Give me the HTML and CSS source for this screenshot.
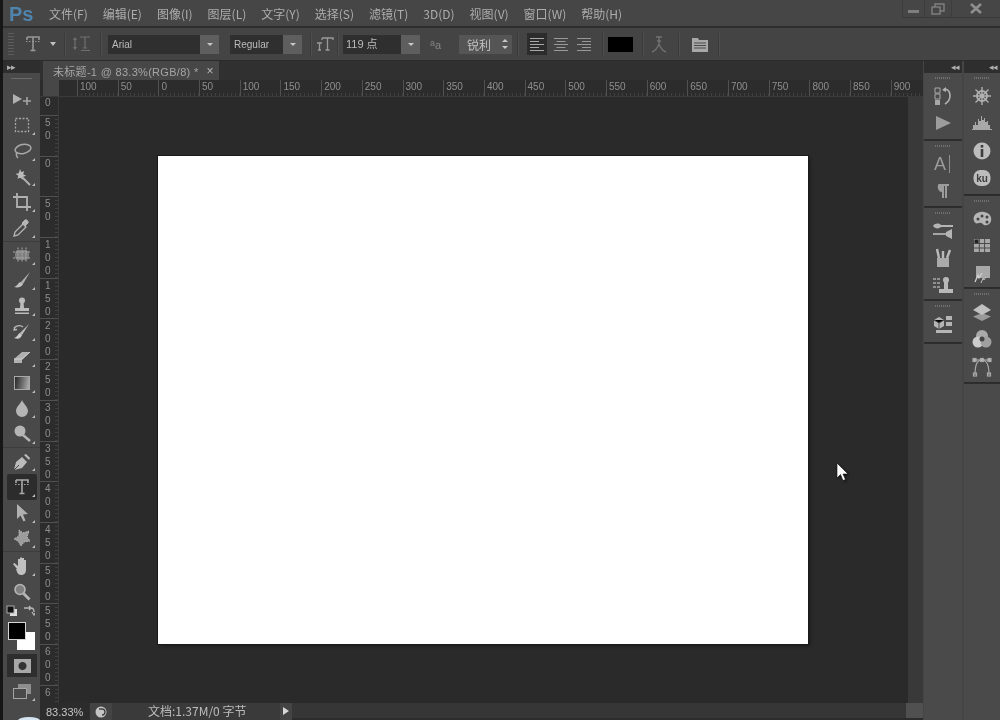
FILE: index.html
```html
<!DOCTYPE html>
<html lang="zh">
<head>
<meta charset="utf-8">
<title>Photoshop</title>
<link rel="stylesheet" href="styles.css">
</head>
<body>
<div class="app">
  <header class="menubar">
    <span class="logo">Ps</span>
    <nav class="menus">
      <span>文件(F)</span><span>编辑(E)</span><span>图像(I)</span><span>图层(L)</span><span>文字(Y)</span><span>选择(S)</span><span>滤镜(T)</span><span>3D(D)</span><span>视图(V)</span><span>窗口(W)</span><span>帮助(H)</span>
    </nav>
    <div class="winctl">
      <span class="wc wc-min"><svg width="14" height="14" viewBox="0 0 14 14"><rect x="1" y="8" width="11" height="3" fill="#7f7f7f"/></svg></span>
      <span class="wc wc-res"><svg width="14" height="14" viewBox="0 0 14 14" fill="none" stroke="#808080" stroke-width="1.4"><rect x="1" y="5" width="8" height="7"/><path d="M4 5V2h9v7H9"/></svg></span>
      <span class="wc wc-close"><svg width="14" height="14" viewBox="0 0 14 14"><path d="M2 2l10 9M12 2L2 11" stroke="#8e8e8e" stroke-width="2.6"/></svg></span>
    </div>
  </header>

  <div class="options">
    <span class="grip"></span>
    <span class="opt opt-tool"><svg width="20" height="20" viewBox="0 0 20 20" fill="none" stroke="#969696"><path d="M4 3h12v3M4 6V3M10 3v13M7.500 16.500h5" stroke-width="1.600"/><path d="M3 7.500h14" stroke-dasharray="1.500 1.500"/></svg></span>
    <span class="caret-sm"></span>
    <span class="sep s1"></span>
    <span class="opt opt-flip"><svg width="20" height="18" viewBox="0 0 20 18" fill="none" stroke="#707070" stroke-width="1.200"><path d="M8 2h10M13 2v11M11 13h4M3 3v11M1.500 5L3 3l1.500 2M1.500 12L3 14l1.500-2M9 15.500h9"/></svg></span>
    <span class="sep s2"></span>
    <span class="combo c-font"><span class="val">Arial</span><span class="btn"></span></span>
    <span class="combo c-style"><span class="val">Regular</span><span class="btn"></span></span>
    <span class="sep s3"></span>
    <span class="opt opt-size"><svg width="20" height="18" viewBox="0 0 20 18" fill="none" stroke="#999" stroke-width="1.300"><path d="M7 3h11v2M7 5V3M12.500 3v12M10.500 15h4M2 8h5M4.500 8v7M3 15h3"/></svg></span>
    <span class="sep s4"></span>
    <span class="combo c-size"><span class="val">119 点</span><span class="btn"></span></span>
    <span class="aa"><small>a</small>a</span>
    <span class="aamode">锐利<i class="updown"></i></span>
    <span class="sep s5"></span>
    <span class="align active"><svg width="16" height="14" viewBox="0 0 16 14" stroke="#a8a8a8"><path d="M1 1.500h14M1 4.500h9M1 7.500h14M1 10.500h9M1 13.500h14"/></svg></span>
    <span class="align"><svg width="16" height="14" viewBox="0 0 16 14" stroke="#999"><path d="M1 1.500h14M3.500 4.500h9M1 7.500h14M3.500 10.500h9M1 13.500h14"/></svg></span>
    <span class="align"><svg width="16" height="14" viewBox="0 0 16 14" stroke="#999"><path d="M1 1.500h14M6 4.500h9M1 7.500h14M6 10.500h9M1 13.500h14"/></svg></span>
    <span class="sep s6"></span>
    <span class="swatch"></span>
    <span class="sep s7"></span>
    <span class="opt opt-warp"><svg width="20" height="20" viewBox="0 0 20 20" fill="none" stroke="#707070" stroke-width="1.400"><path d="M7 3h6M10 3v7M8 7h4M3 18c3-1 5-3 7-8 2 5 4 7 7 8"/></svg></span>
    <span class="sep s8"></span>
    <span class="opt opt-panel"><svg width="18" height="18" viewBox="0 0 18 18"><path d="M1 3h6l1 2h9v12H1z" fill="#a8a8a8"/><path d="M3 8h12M3 10.500h12M3 13h12" stroke="#4a4a4a"/></svg></span>
    <span class="sep s9"></span>
  </div>

  <main class="workspace">
    <aside class="tools">
      <div class="panelhead"><span class="arrows">▸▸</span></div>
      <div class="toolbox">
        <div class="grip-h"></div>
        <div class="tgroup tg-a">
          <span class="tool"><svg width="22" height="20" viewBox="0 0 22 20"><path d="M2 4l9 5-9 5z" fill="#b0b0b0"/><path d="M16 7v8M12 11h8" stroke="#a5a5a5" stroke-width="1.600"/></svg></span>
          <span class="tool has-more"><svg width="20" height="20" viewBox="0 0 20 20"><rect x="3.500" y="3.500" width="13" height="13" fill="none" stroke="#a5a5a5" stroke-width="1.300" stroke-dasharray="2 1.500"/></svg></span>
          <span class="tool has-more"><svg width="20" height="20" viewBox="0 0 20 20" fill="none" stroke="#a8a8a8" stroke-width="1.500"><ellipse cx="11" cy="8" rx="8" ry="4.500" transform="rotate(-12 11 8)"/><path d="M5 11c-1 2-1 4 1 6"/></svg></span>
          <span class="tool has-more"><svg width="20" height="20" viewBox="0 0 20 20"><path d="M8 2l1.200 3 3-.8-1 3 3 1.500-3 1-.5 3-2.400-2-2.800 1 .8-3-2.800-2 3.200-.5z" fill="#bbb"/><path d="M10 10l8 8" stroke="#b0b0b0" stroke-width="2"/></svg></span>
          <span class="tool has-more"><svg width="20" height="20" viewBox="0 0 20 20" fill="none" stroke="#b0b0b0" stroke-width="1.800"><path d="M5 1v14h14M1 5h14v14"/></svg></span>
          <span class="tool has-more"><svg width="20" height="20" viewBox="0 0 20 20"><path d="M2 18l1-4 8-8 3 3-8 8z" fill="none" stroke="#b5b5b5" stroke-width="1.300"/><path d="M10 5l3-3c1.500-1 4 1.500 3 3l-3 3z" fill="#b5b5b5" stroke="#b5b5b5"/></svg></span>
        </div>
        <div class="tgroup">
          <span class="tool has-more"><svg width="20" height="20" viewBox="0 0 20 20"><rect x="3" y="5" width="14" height="10" rx="4" fill="#808080"/><path d="M6 2.500v15M10 2.500v15M14 2.500v15M1 7h18M1 13h18" stroke="#a8a8a8" stroke-width="1" stroke-dasharray="2 1"/></svg></span>
          <span class="tool has-more"><svg width="20" height="20" viewBox="0 0 20 20"><path d="M18 2l-9 10 2 2z" fill="#b0b0b0"/><path d="M9 12c-3 0-3 4-7 5 4 1 8 0 9-3z" fill="#c0c0c0"/></svg></span>
          <span class="tool has-more"><svg width="20" height="20" viewBox="0 0 20 20" fill="#bbb"><circle cx="10" cy="4.500" r="3"/><path d="M8.500 6h3l.5 6h-4z"/><path d="M3 12h14v3H3z"/><rect x="3" y="16.500" width="14" height="1.500"/></svg></span>
          <span class="tool has-more"><svg width="20" height="20" viewBox="0 0 20 20"><path d="M17 2L8 11l2 2z" fill="#bbb"/><path d="M8 11c-2 .5-2 4-6 5 4 1.500 7 .5 8-3z" fill="#ccc"/><path d="M2 6c3-3 7-3 9-1M3 5l-1 3 3-.5" fill="none" stroke="#bbb" stroke-width="1.300"/></svg></span>
          <span class="tool has-more"><svg width="20" height="20" viewBox="0 0 20 20"><path d="M2 12l8-7h8l-8 8v3H2z" fill="#b0b0b0"/><path d="M2 12h8l8-7" fill="none" stroke="#d0d0d0"/></svg></span>
          <span class="tool has-more"><span class="gradient"></span></span>
          <span class="tool has-more"><svg width="20" height="20" viewBox="0 0 20 20"><path d="M10 2c1 3 6 7 6 11a6 6 0 0 1-12 0c0-4 5-8 6-11z" fill="#b5b5b5"/></svg></span>
          <span class="tool has-more"><svg width="20" height="20" viewBox="0 0 20 20"><circle cx="8" cy="7" r="5.500" fill="#b5b5b5"/><path d="M11 11l7 6" stroke="#b5b5b5" stroke-width="2.400"/></svg></span>
        </div>
        <div class="tgroup">
          <span class="tool has-more"><svg width="20" height="20" viewBox="0 0 20 20"><path d="M2 18l2-8 6-5 5 5-5 6z" fill="#bbb"/><path d="M12 3l2-1 4 4-1 2z" fill="#bbb"/><path d="M2 18l5-5" stroke="#444"/></svg></span>
          <span class="tool has-more active"><svg width="20" height="20" viewBox="0 0 20 20" fill="none" stroke="#a8a8a8"><path d="M4 3h12v3M4 6V3M10 3v13M7.500 16.500h5" stroke-width="1.600"/><path d="M3 7.500h14" stroke-dasharray="1.500 1.500"/></svg></span>
          <span class="tool has-more"><svg width="20" height="20" viewBox="0 0 20 20"><path d="M5 1l11 10-5 .5 2.500 6-2 1-3-6L5 16z" fill="#b0b0b0"/></svg></span>
          <span class="tool has-more"><svg width="20" height="20" viewBox="0 0 20 20"><path d="M7 2l4 3 6-2-2 6 3 4-6 1-3 4-3-5-4-2 5-3z" fill="#9c9c9c" stroke="#bbb" stroke-dasharray="1.500 1"/></svg></span>
        </div>
        <div class="tgroup tg-d">
          <span class="tool has-more"><svg width="22" height="22" viewBox="0 0 22 22"><path d="M6 14L2 9l1.500-1L7 11V4h2v6V2.500h2V10V3h2v7.500V5h2v10c0 3-2 5-5 5s-4-3-5-6z" fill="#c0c0c0"/></svg></span>
          <span class="tool"><svg width="20" height="20" viewBox="0 0 20 20"><circle cx="8" cy="7.500" r="5" fill="#808080" stroke="#b5b5b5" stroke-width="1.600"/><path d="M11.500 11.500l6 6" stroke="#b5b5b5" stroke-width="2.800"/></svg></span>
        </div>
        <div class="swap">
          <svg width="12" height="12" viewBox="0 0 12 12"><rect x="4" y="4" width="7" height="7" fill="#ddd"/><rect x="1" y="1" width="7" height="7" fill="#111" stroke="#aaa"/></svg>
          <svg width="12" height="12" viewBox="0 0 12 12" fill="none" stroke="#b5b5b5" stroke-width="1.300"><path d="M1 3h7c2 0 3 1 3 4M6 1L8 3 6 5M9 7l2 3 1-2"/></svg>
        </div>
        <div class="colors"><span class="bg"></span><span class="fg"></span></div>
        <div class="qmask"><span class="qm"><i></i></span></div>
        <span class="tool has-more"><svg width="22" height="20" viewBox="0 0 22 20"><rect x="7" y="3" width="13" height="10" fill="#8e8e8e"/><rect x="2.500" y="7.500" width="13" height="10" fill="#4a4a4a" stroke="#a5a5a5"/></svg></span>
      </div>
    </aside>

    <section class="center">
      <div class="tabbar">
        <div class="tab"><span>未标题-1 @ 83.3%(RGB/8) *</span><span class="tabx">×</span></div>
      </div>
      <div class="hruler">
        <span class="rcorner"></span>
        <span class="hfirst"></span>
        <span class="hcell">100</span><span class="hcell">50</span><span class="hcell">0</span><span class="hcell">50</span><span class="hcell">100</span><span class="hcell">150</span><span class="hcell">200</span><span class="hcell">250</span><span class="hcell">300</span><span class="hcell">350</span><span class="hcell">400</span><span class="hcell">450</span><span class="hcell">500</span><span class="hcell">550</span><span class="hcell">600</span><span class="hcell">650</span><span class="hcell">700</span><span class="hcell">750</span><span class="hcell">800</span><span class="hcell">850</span><span class="hcell hlast">900</span>
      </div>
      <div class="midrow">
        <div class="vruler">
          <span class="vfirst">0</span>
          <span class="vcell">5<br>0</span><span class="vcell">0</span><span class="vcell">5<br>0</span><span class="vcell">1<br>0<br>0</span><span class="vcell">1<br>5<br>0</span><span class="vcell">2<br>0<br>0</span><span class="vcell">2<br>5<br>0</span><span class="vcell">3<br>0<br>0</span><span class="vcell">3<br>5<br>0</span><span class="vcell">4<br>0<br>0</span><span class="vcell">4<br>5<br>0</span><span class="vcell">5<br>0<br>0</span><span class="vcell">5<br>5<br>0</span><span class="vcell">6<br>0<br>0</span><span class="vcell">6</span>
        </div>
        <div class="canvas"><div class="doc"></div></div>
        <div class="vscroll"></div>
      </div>
      <footer class="status">
        <span class="zoomval">83.33%</span>
        <span class="st-icon"><svg width="12" height="12" viewBox="0 0 12 12"><circle cx="6" cy="6" r="5.500" fill="#c5c5c5"/><path d="M4 3h3a3 3 0 0 1 0 6" fill="none" stroke="#444" stroke-width="1.400"/></svg></span>
        <span class="docinfo">文档:1.37M/0 字节</span>
        <span class="st-arrow"></span>
        <span class="hscroll"></span>
        <span class="corner"></span>
      </footer>
    </section>

    <aside class="dock dock1">
      <div class="dockhead"><span class="rw">◂◂</span></div>
      <div class="group g1a">
        <span class="dgrip"></span>
        <span class="dicon"><svg width="20" height="20" viewBox="0 0 20 20"><path d="M2 2h5v5H2zM2 8h5v5H2z" fill="none" stroke="#a8a8a8"/><rect x="2" y="14" width="5" height="5" fill="#a8a8a8"/><path d="M11 3c4 0 6 3 6 7s-2 6-5 8" fill="none" stroke="#b0b0b0" stroke-width="1.600"/><path d="M9 4l4-3v5z" fill="#b0b0b0"/></svg></span>
        <span class="dicon"><svg width="20" height="20" viewBox="0 0 20 20"><path d="M3 3l15 7-15 7z" fill="#9c9c9c"/></svg></span>
      </div>
      <div class="group g1b">
        <span class="dgrip"></span>
        <span class="dicon"><svg width="20" height="20" viewBox="0 0 20 20"><text x="1" y="16" class="dtext">A</text><path d="M16.500 1v18" stroke="#8e8e8e"/></svg></span>
        <span class="dicon"><svg width="20" height="20" viewBox="0 0 20 20"><path d="M6 3h10v2h-2v12h-2V5h-1v12H9v-6c-5 0-5-8-3-8z" fill="#9c9c9c"/></svg></span>
      </div>
      <div class="group g1c">
        <span class="dgrip"></span>
        <span class="dicon"><svg width="22" height="20" viewBox="0 0 22 20"><path d="M1 5c2-3 6-3 8-1h12v2H9c-2 2-6 2-8-1z" fill="#b5b5b5"/><path d="M1 13h13" stroke="#a5a5a5" stroke-width="2"/><path d="M14 11l6-3v10l-6-3z" fill="#b5b5b5"/></svg></span>
        <span class="dicon"><svg width="20" height="22" viewBox="0 0 20 22"><path d="M4 11h12v9H4z" fill="#aaa"/><path d="M6 11L4 2M10 11V4M14 11l3-8" stroke="#bbb" stroke-width="2.400"/></svg></span>
        <span class="dicon"><svg width="22" height="22" viewBox="0 0 22 22"><path d="M1 4h7M1 8h7M1 12h7" stroke="#a8a8a8" stroke-dasharray="3 1" stroke-width="1.300"/><circle cx="14" cy="5" r="3" fill="#b8b8b8"/><path d="M12 7h4v7h-4z" fill="#b8b8b8"/><path d="M7 14h14v4H7z" fill="#b8b8b8"/></svg></span>
      </div>
      <div class="group g1d">
        <span class="dgrip"></span>
        <span class="dicon"><svg width="20" height="20" viewBox="0 0 20 20"><path d="M1 6l5-3 5 3v6l-5 3-5-3z" fill="#b5b5b5"/><path d="M1 6l5 3 5-3M6 9v6" stroke="#4a4a4a"/><rect x="13" y="2" width="6" height="4" fill="#b5b5b5"/><rect x="13" y="8" width="6" height="4" fill="#b5b5b5"/><rect x="3" y="16" width="16" height="3" fill="#b5b5b5"/></svg></span>
      </div>
      <div class="dockfill"></div>
    </aside>

    <aside class="dock dock2">
      <div class="dockhead"><span class="rw">◂◂</span></div>
      <div class="group g2a">
        <span class="dgrip"></span>
        <span class="dicon"><svg width="20" height="20" viewBox="0 0 20 20" fill="none" stroke="#b0b0b0"><circle cx="10" cy="10" r="5" stroke-width="2"/><circle cx="10" cy="10" r="1.800" fill="#b0b0b0"/><path d="M10 1v18M1 10h18M3.500 3.500l13 13M16.500 3.500l-13 13" stroke-width="1.400"/></svg></span>
        <span class="dicon"><svg width="22" height="18" viewBox="0 0 22 18"><path d="M1 15h20v1H1zM2 15V11h2V8h1v3h2V5h1v2h2V2h1v4h2V4h1v4h2V7h1v4h2v4z" fill="#a8a8a8"/></svg></span>
        <span class="dicon"><svg width="20" height="20" viewBox="0 0 20 20"><circle cx="10" cy="10" r="8.500" fill="#bdbdbd"/><rect x="8.700" y="4" width="2.600" height="2.600" fill="#3e3e3e"/><rect x="8.700" y="8" width="2.600" height="8" fill="#3e3e3e"/></svg></span>
        <span class="dicon"><svg width="20" height="20" viewBox="0 0 20 20"><rect x="1.500" y="2" width="17" height="16" rx="7" fill="#bdbdbd"/><text x="10" y="13.500" class="kutext">ku</text></svg></span>
      </div>
      <div class="group g2b">
        <span class="dgrip"></span>
        <span class="dicon"><svg width="20" height="18" viewBox="0 0 20 18"><path d="M2 11C0 5 6 1 12 2s8 5 7 9-5 5-7 4-2-3-5-2-4 0-5-2z" fill="#b5b5b5"/><circle cx="6" cy="9" r="1.500" fill="#444"/><circle cx="10" cy="6" r="1.500" fill="#444"/><circle cx="15" cy="7" r="1.500" fill="#444"/><circle cx="15" cy="12" r="1.500" fill="#444"/></svg></span>
        <span class="dicon"><svg width="18" height="16" viewBox="0 0 18 16"><rect x="1" y="1" width="16" height="13" fill="#a8a8a8"/><path d="M1 5.500h16M1 10h16M6.300 1v13M11.600 1v13" stroke="#4a4a4a"/><rect x="1.500" y="1.500" width="4" height="3.500" fill="#222"/></svg></span>
        <span class="dicon"><svg width="20" height="20" viewBox="0 0 20 20"><rect x="4" y="2" width="14" height="12" fill="#a8a8a8"/><path d="M3 18l3-7 1 3 3-5" fill="none" stroke="#d0d0d0" stroke-width="1.300"/><path d="M9 19l2-5 1 2 2-3" fill="none" stroke="#c0c0c0"/></svg></span>
      </div>
      <div class="group g2c">
        <span class="dgrip"></span>
        <span class="dicon"><svg width="20" height="20" viewBox="0 0 20 20"><path d="M10 11l9 3.500-9 4.500-9-4.500z" fill="#999"/><path d="M10 2l9 6-9 5-9-5z" fill="#c0c0c0"/></svg></span>
        <span class="dicon"><svg width="20" height="20" viewBox="0 0 20 20"><circle cx="10" cy="7" r="6" fill="#aaa"/><circle cx="6" cy="13" r="5.500" fill="#ccc"/><circle cx="14" cy="13" r="5.500" fill="#a0a0a0"/><circle cx="10" cy="10" r="2.500" fill="#444"/></svg></span>
        <span class="dicon"><svg width="20" height="20" viewBox="0 0 20 20" fill="none" stroke="#a8a8a8" stroke-width="1.200"><path d="M3 18C3 8 5 3 10 3s7 5 7 15"/><path d="M2 3h16"/><rect x="1" y="1.500" width="3" height="3" fill="#b8b8b8"/><rect x="16" y="1.500" width="3" height="3" fill="#b8b8b8"/><rect x="8.500" y="1.500" width="3" height="3" fill="#b8b8b8"/><rect x="1.500" y="16" width="3" height="3"/><rect x="15.500" y="16" width="3" height="3"/></svg></span>
      </div>
      <div class="dockfill"></div>
    </aside>
  </main>
  <span class="orb"></span>
  <svg class="cursor" width="14" height="20" viewBox="0 0 14 20"><path d="M1 1v15l3.500-3.500 2.500 6 2.500-1-2.500-5.500H12z" fill="#fff" stroke="#111" stroke-width=".6"/></svg>
</div>
</body>
</html>
```

FILE: styles.css
```css
* { box-sizing: border-box; }
html, body { margin: 0; padding: 0; background: #3a3a3a; }
.app {
  position: relative;
  width: 1000px;
  height: 720px;
  overflow: hidden;
  display: flex;
  flex-direction: column;
  border-left: 3px solid #161616;
  background: #454545;
  font-family: "Liberation Sans", "Noto Sans CJK SC", sans-serif;
  color: #b0b0b0;
  filter: blur(0.6px);
}

/* Menu bar */
.menubar {
  height: 28px;
  flex: none;
  display: flex;
  align-items: flex-start;
  background: #464646;
  border-bottom: 2px solid #2e2e2e;
}
.logo {
  width: 46px;
  padding: 3px 0 0 6px;
  font-size: 20px;
  font-weight: bold;
  color: #4f84ad;
  line-height: 22px;
}
.menus {
  display: flex;
  gap: 15px;
  padding-top: 6px;
  font-size: 12px;
  line-height: 15px;
  color: #adadad;
  font-family: "Noto Sans CJK SC", "Liberation Sans", sans-serif;
  white-space: nowrap;
}
.winctl {
  margin-left: auto;
  display: flex;
  height: 18px;
  border-bottom: 1px solid #3a3a3a;
}
.wc { display: flex; align-items: center; justify-content: center; border-left: 1px solid #3d3d3d; }
.wc-min { width: 22px; }
.wc-res { width: 27px; }
.wc-close { width: 49px; }

/* Options bar */
.options {
  height: 32px;
  flex: none;
  display: flex;
  align-items: center;
  background: #444;
  padding-left: 5px;
}
.grip {
  width: 6px;
  height: 22px;
  flex: none;
  background: repeating-linear-gradient(#5c5c5c 0 1px, transparent 1px 3px);
}
.opt { display: flex; align-items: center; justify-content: center; flex: none; }
.opt-tool { width: 20px; margin-left: 9px; }
.caret-sm { width: 6px; height: 4px; flex: none; border: 3px solid transparent; border-top: 4px solid #c0c0c0; border-bottom: 0; margin-left: 7px; }
.sep { width: 2px; height: 23px; flex: none; background: #3a3a3a; border-right: 1px solid #4f4f4f; }
.s1 { margin-left: 8px; }
.opt-flip { width: 20px; margin-left: 6px; }
.s2 { margin-left: 8px; }
.combo { display: flex; height: 19px; flex: none; font-size: 10px; color: #bcbcbc; }
.val {
  flex: 1;
  background: #2f2f2f;
  padding-left: 4px;
  line-height: 19px;
  white-space: nowrap;
}
.btn { width: 19px; flex: none; position: relative; background: #5e5e5e; }
.btn::after { content: ""; position: absolute; left: 7px; top: 8px; border: 3px solid transparent; border-top: 3px solid #c8c8c8; border-bottom: 0; }
.c-font { width: 111px; margin-left: 6px; }
.c-style { width: 72px; margin-left: 11px; }
.s3 { margin-left: 8px; }
.opt-size { width: 20px; margin-left: 3px; }
.s4 { margin-left: 2px; }
.c-size { width: 77px; margin-left: 4px; font-size: 11px; }
.c-size .val { padding-left: 3px; }
.aa { width: 16px; margin-left: 10px; flex: none; font-size: 11px; color: #858585; line-height: 14px; }
.aa small { font-size: 9px; vertical-align: 3px; }
.aamode {
  flex: none;
  width: 53px;
  height: 19px;
  margin-left: 13px;
  padding-left: 8px;
  display: flex;
  align-items: center;
  position: relative;
  background: #555;
  font-size: 12px;
  color: #c0c0c0;
  font-family: "Noto Sans CJK SC", sans-serif;
}
.updown { position: absolute; right: 4px; top: 5px; width: 6px; height: 9px; }
.updown::before, .updown::after { content: ""; position: absolute; left: 0; border: 3px solid transparent; }
.updown::before { top: -1px; border-bottom: 3px solid #c8c8c8; border-top: 0; }
.updown::after { bottom: 0; border-top: 3px solid #c8c8c8; border-bottom: 0; }
.s5 { margin-left: 5px; }
.align { width: 20px; height: 22px; flex: none; display: flex; align-items: center; justify-content: center; margin-left: 3px; }
.align.active { background: #2c2c2c; margin-left: 8px; }
.align.active + .align { margin-left: 4px; }
.s6 { margin-left: 8px; }
.swatch { width: 25px; height: 15px; flex: none; margin-left: 4px; background: #000; }
.s7 { margin-left: 9px; }
.opt-warp { width: 20px; margin-left: 5px; }
.s8 { margin-left: 9px; }
.opt-panel { width: 20px; margin-left: 10px; }
.s9 { margin-left: 8px; }

/* Workspace */
.workspace { flex: 1; display: flex; min-height: 0; border-top: 1px solid #2b2b2b; }

/* Toolbar */
.tools { width: 37px; flex: none; display: flex; flex-direction: column; background: #494949; }
.panelhead { height: 12px; background: #2e2e2e; flex: none; }
.arrows { display: block; font-size: 9px; line-height: 12px; padding-left: 4px; color: #b0b0b0; letter-spacing: -1px; }
.toolbox { flex: 1; display: flex; flex-direction: column; align-items: stretch; }
.grip-h { height: 1px; margin: 5px 8px 8px; background: #6a6a6a; flex: none; }
.tgroup { display: flex; flex-direction: column; flex: none; border-bottom: 1px solid #3c3c3c; margin-bottom: 1px; }
.tg-a { margin-bottom: .5px; }
.tg-d { border-bottom: 0; margin-bottom: 0; }
.tool { position: relative; height: 25.600px; flex: none; display: flex; align-items: center; justify-content: center; }
.tool.has-more::after { content: ""; position: absolute; right: 5px; bottom: 3px; border-left: 3px solid transparent; border-bottom: 3px solid #bcbcbc; }
.tool.active { background: #2c2c2c; margin: 0 3px 0 4px; border-radius: 2px; }
.tool.active::after { right: 2px; }
.gradient { width: 16px; height: 14px; background: linear-gradient(100deg, #262626, #b0b0b0); border: 1px solid #a8a8a8; }
.swap { display: flex; justify-content: space-between; padding: 0 5px 0 3px; height: 13px; margin-top: 1px; flex: none; }
.colors { position: relative; height: 32px; flex: none; margin-top: 4px; }
.fg { position: absolute; left: 5px; top: 0; width: 18px; height: 18px; background: #000; border: 1px solid #d5d5d5; }
.bg { position: absolute; left: 14px; top: 10px; width: 18px; height: 18px; background: #fff; }
.qmask { height: 24px; flex: none; padding: 0 3px 0 4px; }
.qm { display: flex; align-items: center; justify-content: center; height: 23px; background: #2e2e2e; }
.qm i { display: block; width: 17px; height: 14px; background: radial-gradient(circle, #333 0 3.500px, #a8a8a8 4.500px); }

/* Center */
.center { flex: 1; min-width: 0; display: flex; flex-direction: column; background: #2a2a2a; }
.tabbar { height: 19px; flex: none; background: #303030; }
.tab {
  width: 176px;
  height: 19px;
  margin-left: 3px;
  display: flex;
  align-items: center;
  gap: 8px;
  padding-left: 10px;
  background: #474747;
  font-size: 11px;
  letter-spacing: .3px;
  color: #a5a5a5;
  white-space: nowrap;
}
.tabx { font-size: 12px; color: #b8b8b8; }
.hruler { height: 17px; flex: none; display: flex; background: #2c2c2c; border-bottom: 1px solid #3a3a3a; overflow: hidden; }
.rcorner { width: 19px; flex: none; background: #474747; border-left: 3px solid #2c2c2c; }
.hfirst { width: 18px; flex: none; }
.hcell {
  width: 40.700px;
  flex: none;
  padding: 0 0 0 2px;
  font-size: 10px;
  line-height: 13px;
  color: #8e8e8e;
  border-left: 1px solid #505050;
  background: repeating-linear-gradient(90deg, transparent 0 3px, #404040 3px 4px) bottom / 100% 3px no-repeat;
}
.hlast { width: 30px; overflow: hidden; }
.midrow { flex: 1; display: flex; min-height: 0; }
.vruler { width: 19px; flex: none; background: #2c2c2c; border-right: 1px solid #3a3a3a; overflow: hidden; }
.vfirst { display: block; height: 18px; padding: 0 0 0 5px; font-size: 10px; line-height: 12px; color: #8e8e8e; }
.vcell {
  display: block;
  height: 40.700px;
  padding: 0 0 0 5px;
  font-size: 10px;
  line-height: 13px;
  color: #8e8e8e;
  border-top: 1px solid #505050;
  background: repeating-linear-gradient(transparent 0 3px, #404040 3px 4px) right / 3px 100% no-repeat;
}
.canvas { flex: 1; display: flex; align-items: center; justify-content: center; min-width: 0; }
.doc { width: 650px; height: 488px; background: #fff; box-shadow: 0 0 0 1px #1a1a1a, 2px 2px 3px #1a1a1a; }
.vscroll { width: 17px; flex: none; background: linear-gradient(90deg, #2a2a2a 0 2px, #393939 2px); }
.status { height: 17px; flex: none; display: flex; align-items: stretch; background: #2c2c2c; font-size: 11px; color: #bcbcbc; white-space: nowrap; }
.zoomval { width: 50px; flex: none; padding: 2px 0 0 6px; line-height: 15px; color: #c4c4c4; }
.st-icon { width: 22px; flex: none; display: flex; align-items: center; justify-content: center; background: #434343; }
.docinfo { width: 168px; flex: none; padding-left: 36px; font-size: 12px; line-height: 16px; background: #3a3a3a; font-family: "Noto Sans CJK SC", sans-serif; }
.st-arrow { width: 12px; flex: none; position: relative; background: #444; }
.st-arrow::after { content: ""; position: absolute; left: 3px; top: 4px; border: 4.500px solid transparent; border-left: 6px solid #d8d8d8; border-right: 0; }
.hscroll { flex: 1; margin-bottom: 2px; background: #363636; }
.corner { width: 17px; flex: none; margin-bottom: 2px; background: #505050; }

/* Docks */
.dock { flex: none; display: flex; flex-direction: column; background: #2e2e2e; }
.dock1 { width: 38px; margin-left: 1px; }
.dock2 { width: 36px; margin-left: 2px; }
.dockhead { height: 12px; flex: none; text-align: right; padding-right: 3px; font-size: 9px; line-height: 12px; color: #b0b0b0; letter-spacing: -1px; }
.rw { display: inline-block; }
.group {
  flex: none;
  display: flex;
  flex-direction: column;
  align-items: center;
  background: #4a4a4a;
  border-bottom: 1px solid #2b2b2b;
  margin-bottom: 1px;
}
.dgrip { width: 16px; height: 2px; margin: 4px 0 3px; flex: none; background: repeating-linear-gradient(90deg, #707070 0 1px, #4a4a4a 1px 2px); }
.dicon { height: 27.500px; flex: none; display: flex; align-items: center; justify-content: center; }
.g1a { height: 67px; }
.g1b { height: 66px; }
.g1c { height: 92px; }
.g1d { height: 42px; }
.g2a { height: 122px; }
.g2b { height: 92px; }
.g2c { height: 94px; }
.dockfill { flex: 1; background: #4a4a4a; }
.dtext { font: 18px "Liberation Sans", sans-serif; fill: #9c9c9c; }
.kutext { font: bold 10px "Liberation Sans", sans-serif; fill: #3e3e3e; text-anchor: middle; }

/* Overlays: taskbar orb peeking in at the bottom edge, and the mouse cursor */
.orb { position: absolute; left: 15px; bottom: -4px; width: 22px; height: 7px; border-radius: 50%; background: #d5e6f2; }
.cursor { position: absolute; left: 833px; top: 462px; filter: drop-shadow(1px 1px 1px #111); }
```
